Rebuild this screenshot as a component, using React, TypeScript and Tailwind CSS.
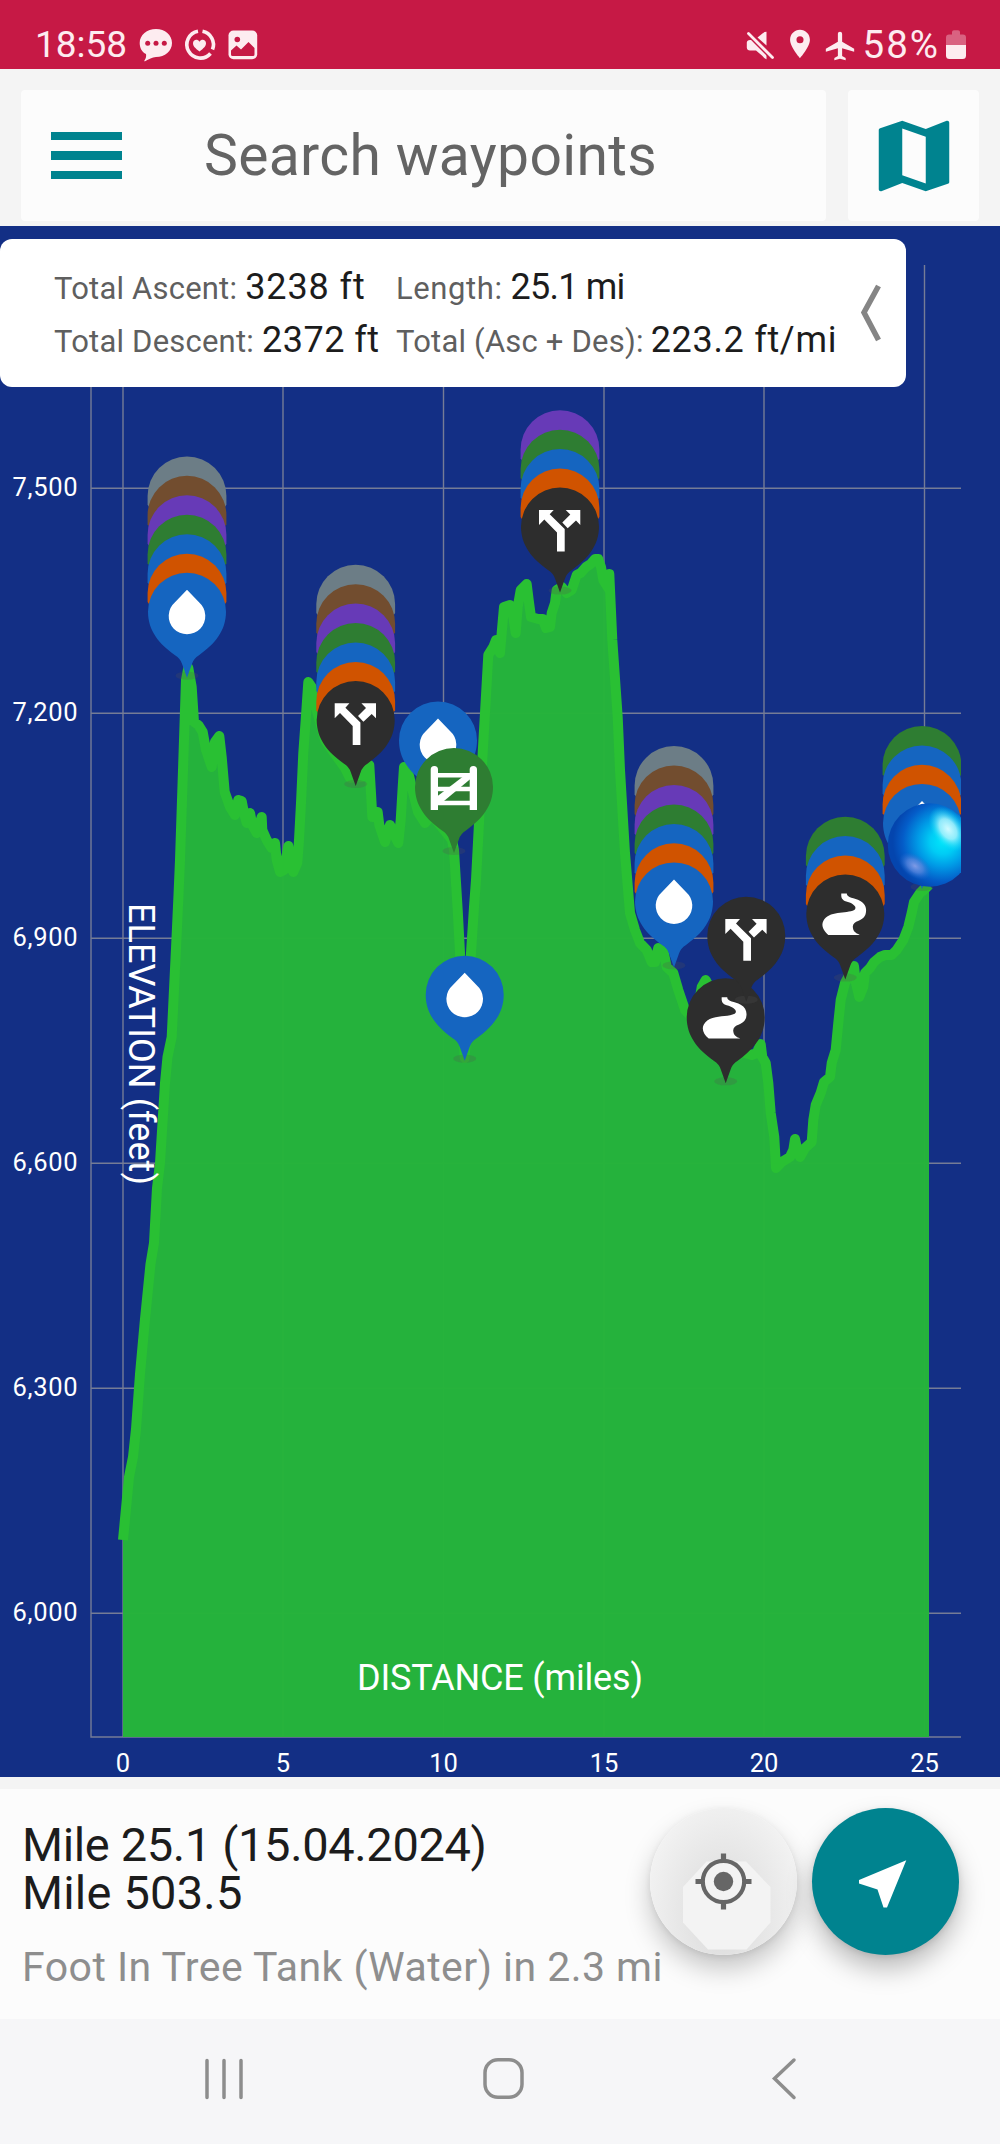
import { MdAirplanemodeActive, MdLocationOn, MdMap } from "react-icons/md";

const COLORS = {
  gray: "#6c7d86",
  brown: "#724d2f",
  purple: "#673ab7",
  green: "#2e7d32",
  blue: "#1565c0",
  orange: "#d05300",
  dark: "#2d2d2d",
};

type Color = keyof typeof COLORS;
type Kind = "water" | "junction" | "gate" | "trail";

interface Waypoint {
  x: number;
  y: number;
  kind: Kind;
  color: Color;
  stack?: Color[];
}

const FULL_STACK: Color[] = ["gray", "brown", "purple", "green", "blue", "orange"];

// x / y is the tip of the pin, stack is listed from back to front
const WAYPOINTS: Waypoint[] = [
  { x: 187, y: 677.7, kind: "water", color: "blue", stack: FULL_STACK },
  { x: 355.7, y: 786, kind: "junction", color: "dark", stack: FULL_STACK },
  { x: 438, y: 806.5, kind: "water", color: "blue" },
  { x: 454, y: 853, kind: "gate", color: "green" },
  { x: 464.7, y: 1060.7, kind: "water", color: "blue" },
  { x: 560, y: 592.6, kind: "junction", color: "dark", stack: ["purple", "green", "blue", "orange"] },
  { x: 674, y: 967.4, kind: "water", color: "blue", stack: FULL_STACK },
  { x: 725.7, y: 1083.3, kind: "trail", color: "dark" },
  { x: 746.3, y: 1001.7, kind: "junction", color: "dark" },
  { x: 845.3, y: 979.6, kind: "trail", color: "dark", stack: ["green", "blue", "orange"] },
  { x: 922, y: 888.9, kind: "water", color: "blue", stack: ["green", "blue", "orange"] },
];

const PROFILE =
  "123,1540 129,1477 133,1457 136,1429 140,1374 145,1319 150.5,1264 154,1243 157,1188 160,1163 165,1083 167.5,1057 171.7,1037 176.5,938 178.5,895 180,860 186,680 188.3,668 191.7,687 194,722 198.3,725 202.7,732 206,750 211.7,767 215,742 219.3,736 221.7,757 224.7,792 230,807 235,815 238.3,800 241.7,801 244,813 246.7,823 250,813 252.3,825 256.7,833 261.7,817 262.3,830 266.7,840 271.7,848 275,843 276.7,860 280,872 284,870 288.3,846 289.3,853 293.3,872 297.3,863 299,840 301,803 303.3,753 305.7,720 308.3,682 311.7,687 314,700 325,740 345,768 350,778 361.7,777 369.3,765 371,793 372.3,817 377.7,812 379.3,825 385,842 390,825 393.3,833 398.3,843 400.7,820 402.7,787 404,767 408.3,773 413.3,793 418,812 425,823 432,815 444,830 452,840 454,850 457.7,910 460,953 464.7,1058 471,953 474,907 476,880 479,823 482.7,753 486.7,683 488.3,655 493.3,647 496,640 500,653 501.7,633 504,607 510,605 512.7,613 515.7,633 517.7,607 520.7,590 526.7,584 528.7,600 531,617 538.3,619 542.7,619 546,628 550,627 551.7,613 555,603 556.7,590 561.7,587 566.7,593 571.7,590 576.7,575 580.7,573 586,567 590.7,564 595,559 598.3,559 601,567 603.3,580 608.3,588 609.3,574 612.3,640 617.7,717 620,770 625,853 630,913 635,930 640,943 646.7,950 651.7,962 655,962 658.3,948 663.3,950 666.7,967 673.3,973 678.3,990 681.7,1000 685,1010 691.7,1017 698.3,1007 701.7,987 705.7,980 709.3,987 720,1020 735,1050 751.7,1055 756.7,1053 760.7,1044 762.3,1057 765.7,1063 768.3,1083 770.7,1113 774.3,1137 776,1168 781.7,1162 790,1157 793.3,1150 795,1139 797.3,1150 800,1157 805,1148 811.7,1142 813.3,1120 815.7,1105 820.7,1093 824,1082 830,1077 831.7,1063 835.7,1050 838.3,1023 840.7,1000 845,983 848.3,977 854,966 856,983 859.3,997 863.3,987 865,973 870,968 874,962 880,957 885,955 891.7,955 896.7,950 903.3,940 908.3,927 911.7,913 914,902 920,893 925,888 929,892";

const Y_TICKS = [
  { label: "7,500", y: 488.3 },
  { label: "7,200", y: 713.3 },
  { label: "6,900", y: 938.3 },
  { label: "6,600", y: 1163.3 },
  { label: "6,300", y: 1388.3 },
  { label: "6,000", y: 1613.3 },
];

const X_TICKS = [
  { label: "0", x: 123 },
  { label: "5", x: 283 },
  { label: "10", x: 443.5 },
  { label: "15", x: 604 },
  { label: "20", x: 764 },
  { label: "25", x: 924.5 },
];

const PIN_PATH =
  "M0 0L-5 -14Q-6.5 -19 -12 -22.5C-28 -34 -39 -47 -39 -66A39 39 0 0 1 39 -66C39 -47 28 -34 12 -22.5Q6.5 -19 5 -14Z";

// Rounded cap that peeks out above the front pin
const CAP_PATH = "M-39.4 9V0A39.4 39.4 0 0 1 39.4 0V9L36 14H-36Z";

function PinIcon({ kind }: { kind: Kind }) {
  if (kind === "water") {
    return <path fill="#fff" d="M0 -88L12 -75.5A18.3 18.3 0 1 1 -12 -75.5Z" />;
  }
  if (kind === "junction") {
    return (
      <g fill="#fff">
        <path d="M-21 -82.7H-6.3L-10.3 -78.3L4.7 -63.5V-41H-3V-60L-15.7 -73L-21 -67.7Z" />
        <path d="M5.7 -82.7H20.3V-67.7L16 -72L7.7 -64.3L2.3 -70L10.3 -78Z" />
      </g>
    );
  }
  if (kind === "gate") {
    return (
      <g fill="#fff">
        <path d="M-23.3 -43V-83.4A3.65 3.65 0 0 1 -16 -83.4V-43Z" />
        <path d="M15.7 -43V-83.4A3.65 3.65 0 0 1 23 -83.4V-43Z" />
        <path d="M-18 -80H18V-75.5H-18ZM-18 -66.2H18V-61.8H-18ZM-18 -52.2H18V-47.8H-18Z" />
        <path d="M-17 -56.5L13 -79.5H17V-74.5L-13 -49.5H-17Z" />
      </g>
    );
  }
  return (
    <path
      fill="#fff"
      d="M-4 -86H1.5C1.5 -81.5 9 -82 15 -78.5C20.5 -75.5 22 -70 20 -64.5C17 -57.5 8 -59.5 7.5 -53C7.6 -48.5 10 -46.5 14.5 -44.7H-17C-22 -49 -24.3 -54 -22 -58.5C-17 -69 1 -65.5 9 -69.5C12.5 -72 8 -76.5 1 -78C-3.5 -79.5 -4.3 -82 -4 -86Z"
    />
  );
}

function Pin({ x, y, kind, color, stack = [] }: Waypoint) {
  return (
    <g transform={`translate(${x} ${y})`}>
      {stack.map((c, i) => (
        <path
          key={i}
          d={CAP_PATH}
          fill={COLORS[c]}
          transform={`translate(0 ${-65.2 - 19.45 * (stack.length - i)})`}
        />
      ))}
      <ellipse cy={-2} rx={11.5} ry={4} fill="#555" opacity={0.24} />
      <path d={PIN_PATH} fill={COLORS[color]} />
      <PinIcon kind={kind} />
    </g>
  );
}

function ElevationChart() {
  return (
    <svg
      className="block w-full font-[Roboto,sans-serif]"
      viewBox="0 226 1000 1551"
      width={1000}
      height={1551}
    >
      <defs>
        <clipPath id="plot">
          <rect x={91} y={226} width={870} height={1512} />
        </clipPath>
        <radialGradient id="ball" cx="0.66" cy="0.46" r="0.6">
          <stop offset="0" stopColor="#00e6fb" />
          <stop offset="0.25" stopColor="#00ccf5" />
          <stop offset="0.5" stopColor="#009ae6" />
          <stop offset="0.8" stopColor="#045cc8" />
          <stop offset="1" stopColor="#0445ae" />
        </radialGradient>
        <radialGradient id="shine">
          <stop offset="0" stopColor="#d2faff" />
          <stop offset="0.45" stopColor="#a8f3fd" stopOpacity="0.85" />
          <stop offset="1" stopColor="#00dcf8" stopOpacity="0" />
        </radialGradient>
        <radialGradient id="glow">
          <stop offset="0" stopColor="#7f9be6" />
          <stop offset="0.5" stopColor="#5f88de" stopOpacity="0.7" />
          <stop offset="1" stopColor="#2a6bd0" stopOpacity="0" />
        </radialGradient>
      </defs>

      <g stroke="#757c96" strokeWidth={1.4}>
        <path d="M91 265V1737H961" fill="none" />
        {X_TICKS.map((t) => (
          <line key={t.label} x1={t.x} x2={t.x} y1={265} y2={1737} />
        ))}
        {Y_TICKS.map((t) => (
          <line key={t.label} x1={91} x2={961} y1={t.y} y2={t.y} />
        ))}
      </g>

      <polygon points={`123,1737 ${PROFILE} 929,1737`} fill="#26b53a" fillOpacity={0.98} />
      <polyline
        points={PROFILE}
        fill="none"
        stroke="#29c033"
        strokeWidth={10}
        strokeLinejoin="round"
      />

      <g clipPath="url(#plot)">
        {WAYPOINTS.map((w, i) => (
          <Pin key={i} {...w} />
        ))}
        <circle cx={929.5} cy={845} r={41.7} fill="url(#ball)" />
        <ellipse cx={948} cy={829} rx={16} ry={25} fill="url(#shine)" transform="rotate(-35 948 829)" />
        <ellipse cx={915} cy={866} rx={11} ry={18} fill="url(#glow)" transform="rotate(-55 915 866)" />
      </g>

      <g fill="#fff" fontSize={25.5}>
        {Y_TICKS.map((t) => (
          <text key={t.label} x={77.5} y={t.y + 7.5} textAnchor="end" textLength={65}>
            {t.label}
          </text>
        ))}
        {X_TICKS.map((t) => (
          <text key={t.label} x={t.x} y={1772} textAnchor="middle">
            {t.label}
          </text>
        ))}
      </g>
      <g fill="#fff" fontSize={36}>
        <text x={357} y={1689.5} textLength={286}>
          DISTANCE (miles)
        </text>
        <text transform="translate(129 903) rotate(90)" textLength={282}>
          ELEVATION (feet)
        </text>
      </g>
    </svg>
  );
}

function StatusBar() {
  return (
    <div className="flex h-[69px] items-start bg-[#c61945] pt-[26px] pr-[34px] pl-[35px] text-[#fdecf0]">
      <span className="w-[104px] text-[37px] leading-[38px]">18:58</span>
      <svg className="mt-[2px] h-[34px] w-[36px]" viewBox="0 0 36 34" fill="currentColor">
        <path d="M17 1C26 1 33 7 33 15S26 29 17 29C13 29 10 31.5 6 33.3C5.2 33.5 5 33 5.6 32.2C7 30 7.4 28.5 7 26C3 24 .7 20 .7 15C.7 7 8 1 17 1Z" />
        <g fill="#c61945">
          <circle cx="8.7" cy="15.2" r="2.5" />
          <circle cx="17" cy="15.2" r="2.5" />
          <circle cx="25.3" cy="15.2" r="2.5" />
        </g>
      </svg>
      <svg className="mt-[2px] ml-[8px] h-[34px] w-[34px]" viewBox="0 0 34 34" fill="none" stroke="currentColor" strokeWidth="3.6">
        <path d="M15 3.3A13.5 13.5 0 1 0 27.5 25.5" />
        <path d="M19.5 3.3A13.5 13.5 0 0 1 29.5 21.5" />
        <path
          fill="currentColor"
          stroke="none"
          d="M16.5 23.5C12 20 10 18 10 15.2C10 11.5 14.5 10.5 16.5 13.7C18.5 10.5 23 11.5 23 15.2C23 18 21 20 16.5 23.5Z"
        />
      </svg>
      <svg className="mt-[4px] ml-[11px] h-[30px] w-[30px]" viewBox="0 0 30 30" fill="currentColor">
        <rect x=".5" y=".5" width="28.7" height="28.7" rx="5" />
        <path fill="#c61945" d="M3 20.5L8.5 15.5L13 19.5L20.5 12L26.5 18V24.5A1.5 1.5 0 0 1 25 26H4.5A1.5 1.5 0 0 1 3 24.5Z" />
        <circle cx="9.3" cy="9.5" r="2.8" fill="#c61945" />
      </svg>

      <svg className="mt-[5px] ml-auto h-[30px] w-[28px]" viewBox="0 0 28 30" fill="currentColor">
        <path d="M.8 11.5Q1 9 4 9H6.5L20.5 23V28.3Q19 28.5 16.5 25L10 19.5H4Q1 19.5 .8 16.5Z" />
        <path d="M20.5 .7V14.5L11.5 6.5L18.5 .9Z" />
        <path d="M2.5 2.5L27 27" stroke="#c61945" strokeWidth="5.5" />
        <path d="M2.5 2.5L26.5 26.5" stroke="currentColor" strokeWidth="2.8" strokeLinecap="round" />
      </svg>
      <MdLocationOn className="mt-[1px] ml-[9px] size-[34px]" />
      <MdAirplanemodeActive className="mt-[3px] ml-[6px] size-[34px]" />
      <span className="ml-[6px] text-[38.5px] leading-[38px] tracking-[2px]">58%</span>
      <svg className="mt-[4px] ml-[6px] h-[30px] w-[20px]" viewBox="0 0 20 30" fill="currentColor">
        <path opacity=".35" d="M0 15V7.5Q0 4.5 3 4.5H6V2Q6 .3 8 .3H12Q14 .3 14 2V4.5H17Q20 4.5 20 7.5V15Z" />
        <path d="M0 15H20V25.5Q20 29 16.5 29H3.5Q0 29 0 25.5Z" />
      </svg>
    </div>
  );
}

function Header() {
  return (
    <header className="flex h-[157px] gap-[22px] bg-[#f4f4f4] pt-[21px] pr-[21px] pl-[21px]">
      <div className="flex h-[131px] w-[805px] items-center rounded-[4px] bg-[#fcfcfc] pl-[30px]">
        <button className="flex w-[71px] flex-col gap-[11px]">
          <span className="h-[8.4px] w-full bg-[#00838f]" />
          <span className="h-[8.4px] w-full bg-[#00838f]" />
          <span className="h-[8.4px] w-full bg-[#00838f]" />
        </button>
        <span className="ml-[82px] text-[57px] leading-none tracking-[0.35px] text-[#646464]">
          Search waypoints
        </span>
      </div>
      <button className="flex size-[131px] items-center justify-center rounded-[4px] bg-[#fcfcfc]">
        <MdMap className="size-[94px] text-[#00838f]" />
      </button>
    </header>
  );
}

function SummaryCard() {
  return (
    <div className="absolute top-[13px] left-0 flex h-[148px] w-[906px] rounded-[12px] bg-white pt-[30px] pl-[54px]">
      <div className="grid h-[106px] w-[800px] grid-cols-[342px_1fr] text-[31px] leading-none tracking-[0.2px] whitespace-nowrap text-[#5f5f5f]">
        <div className="flex h-[53px] items-baseline gap-[8px]">
          Total Ascent:
          <span className="text-[36px] tracking-[0.9px] text-[#1c1c1c]">3238 ft</span>
        </div>
        <div className="flex h-[53px] items-baseline gap-[8px] tracking-[0.6px]">
          Length:
          <span className="text-[36px] tracking-[-0.8px] text-[#1c1c1c]">25.1 mi</span>
        </div>
        <div className="flex h-[53px] items-baseline gap-[8px]">
          Total Descent:
          <span className="text-[36px] tracking-[0.5px] text-[#1c1c1c]">2372 ft</span>
        </div>
        <div className="flex h-[53px] items-baseline gap-[7px]">
          Total (Asc + Des):
          <span className="text-[36px] tracking-[0.7px] text-[#1c1c1c]">223.2 ft/mi</span>
        </div>
      </div>
      <svg className="mt-[14px] ml-[6px] h-[60px] w-[24px]" viewBox="0 0 24 60" fill="none">
        <path d="M18.5 3L4 29.5L18.5 57" stroke="#858585" strokeWidth="5.5" />
      </svg>
    </div>
  );
}

function LocationPanel() {
  return (
    <section className="flex h-[230px] justify-between bg-[#fcfcfc] pr-[41px] pl-[22px]">
      <div className="w-[627px] pt-[32px] whitespace-nowrap">
        <p className="text-[47px] leading-[47.5px] tracking-[-0.35px] text-[#1c1c1c]">
          Mile 25.1 (15.04.2024)
        </p>
        <p className="text-[47px] leading-[47.5px] tracking-[0.2px] text-[#1c1c1c]">Mile 503.5</p>
        <p className="mt-[31px] text-[41px] leading-[41px] tracking-[0.46px] text-[#8e8e8e]">
          Foot In Tree Tank (Water) in 2.3 mi
        </p>
      </div>
      <div className="flex w-[309px] shrink-0 gap-[15px] pt-[18.5px]">
        <button className="size-[147px] rounded-full bg-radial-[at_50%_72%] from-[#d8d8d8] via-[#e6e6e6] via-40% to-[#f3f3f3] to-80% shadow-[0_14px_26px_rgba(0,0,0,0.22),0_2px_6px_rgba(0,0,0,0.08)]">
          <svg className="size-[147px]" viewBox="0 0 147 147" fill="none">
            <path fill="#f3f3f3" d="M56.5 53.5H96L120.5 79V114.5L96.5 141.5H58L33 114.5V79Z" />
            <circle cx="73.5" cy="73.5" r="20.7" stroke="#666" strokeWidth="4.2" />
            <circle cx="73.5" cy="73.5" r="9.7" fill="#666" />
            <path
              d="M73.5 45.5V53M73.5 94V101.5M45.5 73.5H53M94 73.5H101.5"
              stroke="#666"
              strokeWidth="5.2"
            />
          </svg>
        </button>
        <button className="size-[147px] rounded-full bg-[#00838f] shadow-[0_14px_26px_rgba(0,0,0,0.26),0_2px_6px_rgba(0,0,0,0.1)]">
          <svg className="size-[147px]" viewBox="0 0 147 147">
            <path fill="#fff" d="M94.3 52.2L75 99.5H71.5L65.5 81.5L47 75.5V72Z" />
          </svg>
        </button>
      </div>
    </section>
  );
}

function NavigationBar() {
  return (
    <nav className="flex h-[125px] items-start bg-[#f6f6f8] pt-[37px] pl-[203px] text-[#8d8d8d]">
      <svg className="size-[44px]" viewBox="0 0 44 44" fill="none" stroke="currentColor" strokeWidth="3.5" strokeLinecap="round">
        <path d="M4 4.5V41.5M21 4.5V41.5M38 4.5V41.5" />
      </svg>
      <svg className="ml-[233px] size-[46px]" viewBox="0 0 46 46" fill="none" stroke="currentColor" strokeWidth="3.5">
        <rect x="5" y="3.7" width="37" height="37.5" rx="13" />
      </svg>
      <svg className="ml-[242px] h-[46px] w-[32px]" viewBox="0 0 32 46" fill="none" stroke="currentColor" strokeWidth="3.5" strokeLinecap="round">
        <path d="M26 4L6.5 22.5L26 41.5" />
      </svg>
    </nav>
  );
}

export default function App() {
  return (
    <div className="flex h-[2144px] w-[1000px] flex-col overflow-hidden bg-[#f4f4f4] font-[Roboto,sans-serif]">
      <StatusBar />
      <Header />
      <main className="relative h-[1551px] bg-[#132f85]">
        <ElevationChart />
        <SummaryCard />
      </main>
      <div className="h-[12px] bg-[#f4f4f4]" />
      <LocationPanel />
      <NavigationBar />
    </div>
  );
}
